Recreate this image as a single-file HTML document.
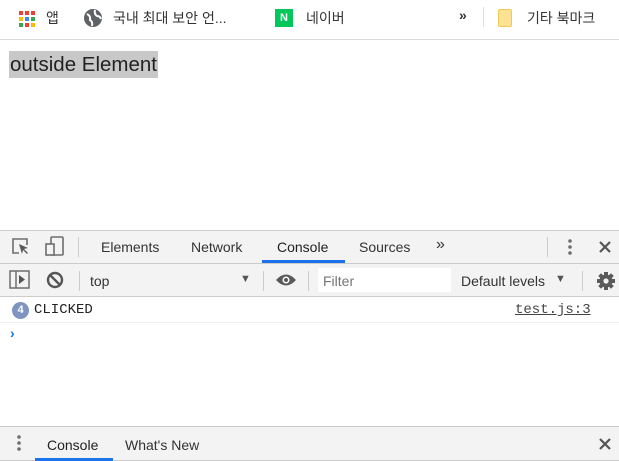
<!DOCTYPE html>
<html><head><meta charset="utf-8"><style>
*{margin:0;padding:0;box-sizing:border-box}
body{width:619px;height:461px;overflow:hidden;background:#fff;font-family:"Liberation Sans","Noto Sans CJK KR",sans-serif;position:relative}
.abs{position:absolute}
.t{font-size:14px;color:#333;white-space:nowrap}
.dt{font-size:14px;color:#333;white-space:nowrap}
.gray{background:#f3f3f3}
</style></head><body>
<div class="abs" style="left:0;top:0;width:619px;height:40px;border-bottom:1px solid #dadada"></div>
<svg class="abs" style="left:18px;top:10px" width="18" height="18">
<rect x="1" y="1" width="4" height="4" fill="#ea4335"/><rect x="7" y="1" width="4" height="4" fill="#ea4335"/><rect x="13" y="1" width="4" height="4" fill="#ea4335"/>
<rect x="1" y="7" width="4" height="4" fill="#fbbc05"/><rect x="7" y="7" width="4" height="4" fill="#4285f4"/><rect x="13" y="7" width="4" height="4" fill="#34a853"/>
<rect x="1" y="13" width="4" height="4" fill="#34a853"/><rect x="7" y="13" width="4" height="4" fill="#ea4335"/><rect x="13" y="13" width="4" height="4" fill="#fbbc05"/></svg>
<div class="abs t" style="left:46px;top:8px">앱</div>
<svg class="abs" style="left:83px;top:8px" width="20" height="20"><circle cx="10" cy="10" r="9" fill="#5f6368"/><path d="M4 6 Q8 8 7 12 Q10 14 9 18 M12 2 Q11 6 14 8 Q17 8 18 11" stroke="#fff" stroke-width="2" fill="none"/></svg>
<div class="abs t" style="left:113px;top:8px">국내 최대 보안 언...</div>
<div class="abs" style="left:275px;top:9px;width:18px;height:18px;background:#03c75a;color:#fff;font-size:11px;font-weight:bold;text-align:center;line-height:18px">N</div>
<div class="abs t" style="left:306px;top:8px">네이버</div>
<div class="abs t" style="left:459px;top:7px;font-weight:bold">»</div>
<div class="abs" style="left:483px;top:7px;width:1px;height:20px;background:#ddd"></div>
<div class="abs" style="left:498px;top:9px;width:14px;height:18px;background:#fde293;border:1px solid #f1c956;border-radius:2px"></div>
<div class="abs t" style="left:527px;top:8px">기타 북마크</div>
<div class="abs" style="left:9px;top:51px;height:27px;background:#c8c8c8;font-size:20.5px;line-height:27px;color:#222;padding:0 1px">outside Element</div>
<div class="abs gray" style="left:0;top:230px;width:619px;height:34px;border-top:1px solid #ccc;border-bottom:1px solid #ccc"></div>
<svg class="abs" style="left:10px;top:236px" width="22" height="22"><path d="M9 17H3V3h14v6" stroke="#6e6e6e" stroke-width="1.6" fill="none"/><path d="M9 8l9 4-4 1 4 4-1 1-4-4-1 4z" fill="#5a5a5a"/></svg>
<svg class="abs" style="left:44px;top:235px" width="22" height="24"><rect x="7" y="2" width="12" height="18" stroke="#6e6e6e" stroke-width="1.6" fill="none" rx="1"/><rect x="2" y="9" width="8" height="11" stroke="#6e6e6e" stroke-width="1.6" fill="#f3f3f3"/></svg>
<div class="abs" style="left:78px;top:237px;width:1px;height:20px;background:#ccc"></div>
<div class="abs dt" style="left:101px;top:239px">Elements</div>
<div class="abs dt" style="left:191px;top:239px">Network</div>
<div class="abs dt" style="left:277px;top:239px;color:#222">Console</div>
<div class="abs" style="left:262px;top:260px;width:83px;height:3px;background:#1a73e8"></div>
<div class="abs dt" style="left:359px;top:239px">Sources</div>
<div class="abs dt" style="left:436px;top:236px;font-size:16px">»</div>
<div class="abs" style="left:547px;top:237px;width:1px;height:20px;background:#ccc"></div>
<svg class="abs" style="left:566px;top:237px" width="8" height="20"><circle cx="4" cy="4" r="1.8" fill="#6e6e6e"/><circle cx="4" cy="10" r="1.8" fill="#6e6e6e"/><circle cx="4" cy="16" r="1.8" fill="#6e6e6e"/></svg>
<svg class="abs" style="left:598px;top:240px" width="14" height="14"><path d="M2 2L12 12M12 2L2 12" stroke="#555" stroke-width="2.2"/></svg>
<div class="abs gray" style="left:0;top:264px;width:619px;height:33px;border-bottom:1px solid #ccc"></div>
<svg class="abs" style="left:9px;top:270px" width="22" height="20"><rect x="1" y="1" width="19" height="17" stroke="#6e6e6e" stroke-width="1.5" fill="none"/><line x1="7" y1="1" x2="7" y2="18" stroke="#6e6e6e" stroke-width="1.5"/><path d="M10 5l6 4.5-6 4.5z" fill="#555"/></svg>
<svg class="abs" style="left:46px;top:271px" width="18" height="18"><circle cx="9" cy="9" r="7" stroke="#555" stroke-width="2.4" fill="none"/><path d="M4 4L14 14" stroke="#555" stroke-width="2.4"/></svg>
<div class="abs" style="left:79px;top:271px;width:1px;height:20px;background:#ccc"></div>
<div class="abs dt" style="left:90px;top:273px">top</div>
<div class="abs" style="left:240px;top:273px;font-size:11px;color:#555">▼</div>
<div class="abs" style="left:263px;top:271px;width:1px;height:20px;background:#ccc"></div>
<svg class="abs" style="left:275px;top:273px" width="22" height="14"><path d="M1 7Q11 -4 21 7Q11 18 1 7z" fill="#5a5a5a"/><circle cx="11" cy="7" r="3.5" fill="#fff"/><circle cx="11" cy="7" r="2" fill="#5a5a5a"/></svg>
<div class="abs" style="left:308px;top:271px;width:1px;height:20px;background:#ccc"></div>
<div class="abs" style="left:318px;top:268px;width:133px;height:24px;background:#fff"></div>
<div class="abs dt" style="left:323px;top:273px;color:#757575">Filter</div>
<div class="abs dt" style="left:461px;top:273px">Default levels</div>
<div class="abs" style="left:555px;top:273px;font-size:11px;color:#555">▼</div>
<div class="abs" style="left:582px;top:271px;width:1px;height:20px;background:#ccc"></div>
<svg class="abs" style="left:596px;top:271px" width="20" height="20"><g fill="#5a5a5a"><circle cx="10" cy="10" r="6.5"/><rect x="8" y="1" width="4" height="18"/><rect x="1" y="8" width="18" height="4"/><rect x="8" y="1" width="4" height="18" transform="rotate(45 10 10)"/><rect x="8" y="1" width="4" height="18" transform="rotate(-45 10 10)"/></g><circle cx="10" cy="10" r="2.6" fill="#f3f3f3"/></svg>
<div class="abs" style="left:12px;top:302px;width:17px;height:17px;border-radius:50%;background:#7e96bf;color:#fff;font-size:11px;font-weight:bold;text-align:center;line-height:17px">4</div>
<div class="abs" style="left:34px;top:302px;font-family:'Liberation Mono',monospace;font-size:14px;color:#222">CLICKED</div>
<div class="abs" style="left:515px;top:302px;font-family:'Liberation Mono',monospace;font-size:14px;color:#444;text-decoration:underline">test.js:3</div>
<div class="abs" style="left:0;top:322px;width:619px;height:1px;background:#f0f0f0"></div>
<div class="abs" style="left:10px;top:325px;color:#1a73e8;font-size:14px;font-weight:bold">›</div>
<div class="abs gray" style="left:0;top:426px;width:619px;height:35px;border-top:1px solid #ccc;border-bottom:1px solid #ccc"></div>
<svg class="abs" style="left:16px;top:434px" width="8" height="20"><circle cx="3" cy="3" r="1.8" fill="#6e6e6e"/><circle cx="3" cy="9" r="1.8" fill="#6e6e6e"/><circle cx="3" cy="15" r="1.8" fill="#6e6e6e"/></svg>
<div class="abs dt" style="left:47px;top:437px;color:#222">Console</div>
<div class="abs" style="left:35px;top:458px;width:78px;height:3px;background:#1a73e8"></div>
<div class="abs dt" style="left:125px;top:437px">What's New</div>
<svg class="abs" style="left:598px;top:437px" width="14" height="14"><path d="M2 2L12 12M12 2L2 12" stroke="#555" stroke-width="2.2"/></svg>
</body></html>
